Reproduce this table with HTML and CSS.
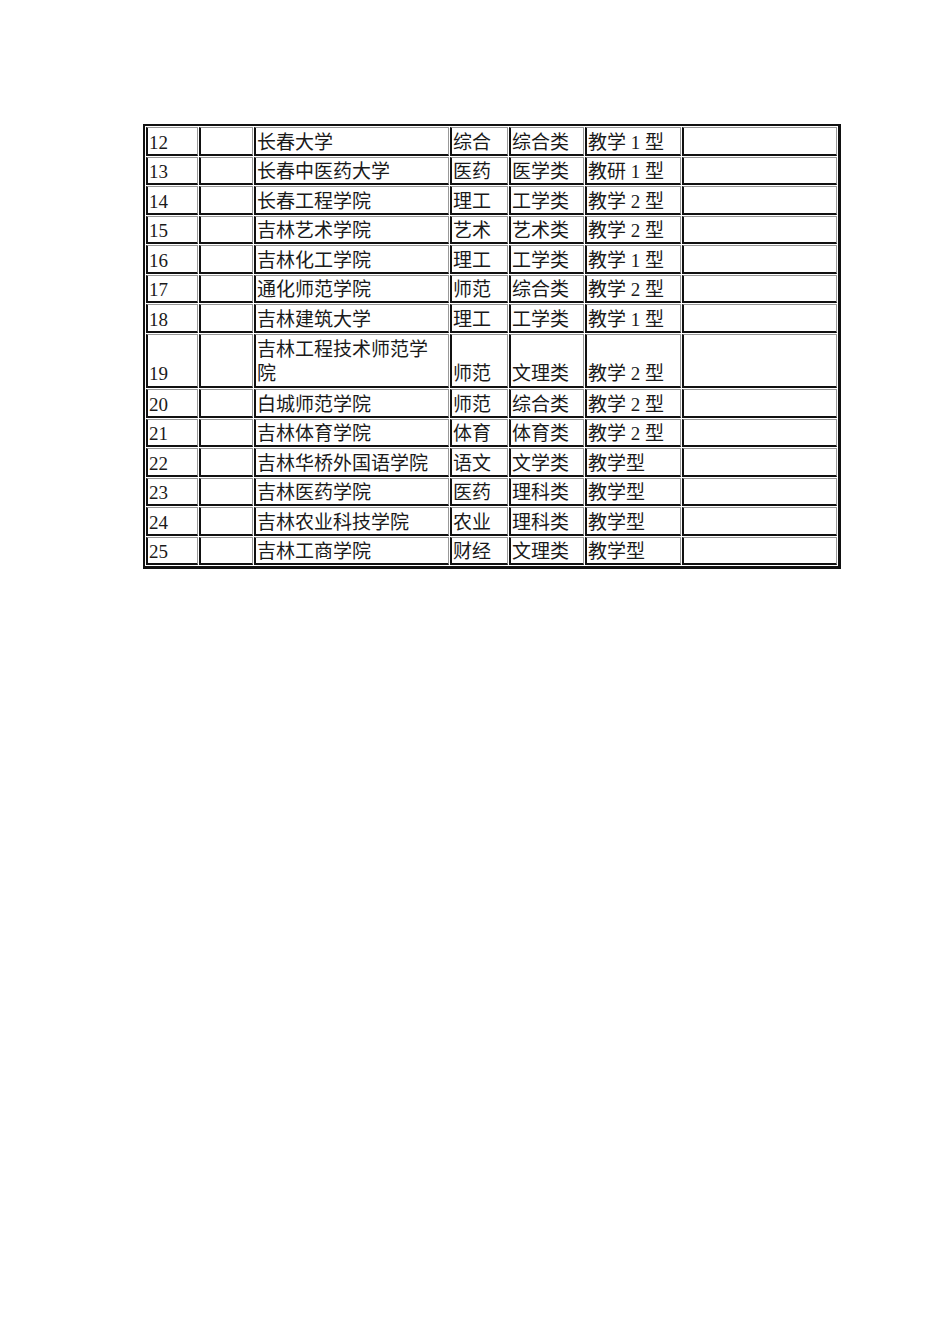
FILE: index.html
```html
<!DOCTYPE html>
<html lang="zh">
<head>
<meta charset="utf-8">
<title>吉林高校列表</title>
<link rel="stylesheet" href="styles.css">
</head>
<body>
<div class="sheet">
<table class="list">
<colgroup>
<col class="c1"><col class="c2"><col class="c3"><col class="c4"><col class="c5"><col class="c6"><col class="c7">
</colgroup>
<tbody>
<tr><td>12</td><td></td><td>长春大学</td><td>综合</td><td>综合类</td><td>教学 1 型</td><td></td></tr>
<tr><td>13</td><td></td><td>长春中医药大学</td><td>医药</td><td>医学类</td><td>教研 1 型</td><td></td></tr>
<tr><td>14</td><td></td><td>长春工程学院</td><td>理工</td><td>工学类</td><td>教学 2 型</td><td></td></tr>
<tr><td>15</td><td></td><td>吉林艺术学院</td><td>艺术</td><td>艺术类</td><td>教学 2 型</td><td></td></tr>
<tr><td>16</td><td></td><td>吉林化工学院</td><td>理工</td><td>工学类</td><td>教学 1 型</td><td></td></tr>
<tr><td>17</td><td></td><td>通化师范学院</td><td>师范</td><td>综合类</td><td>教学 2 型</td><td></td></tr>
<tr><td>18</td><td></td><td>吉林建筑大学</td><td>理工</td><td>工学类</td><td>教学 1 型</td><td></td></tr>
<tr class="tall"><td>19</td><td></td><td>吉林工程技术师范学<br>院</td><td>师范</td><td>文理类</td><td>教学 2 型</td><td></td></tr>
<tr><td>20</td><td></td><td>白城师范学院</td><td>师范</td><td>综合类</td><td>教学 2 型</td><td></td></tr>
<tr><td>21</td><td></td><td>吉林体育学院</td><td>体育</td><td>体育类</td><td>教学 2 型</td><td></td></tr>
<tr><td>22</td><td></td><td>吉林华桥外国语学院</td><td>语文</td><td>文学类</td><td>教学型</td><td></td></tr>
<tr><td>23</td><td></td><td>吉林医药学院</td><td>医药</td><td>理科类</td><td>教学型</td><td></td></tr>
<tr><td>24</td><td></td><td>吉林农业科技学院</td><td>农业</td><td>理科类</td><td>教学型</td><td></td></tr>
<tr><td>25</td><td></td><td>吉林工商学院</td><td>财经</td><td>文理类</td><td>教学型</td><td></td></tr>
</tbody>
</table>
</div>
</body>
</html>
```

FILE: styles.css
```css
html, body {
  margin: 0;
  padding: 0;
  background: #fff;
}

.sheet {
  width: 950px;
  height: 1344px;
  padding: 124px 0 0 143px;
  box-sizing: border-box;
}

.list {
  table-layout: fixed;
  width: 698px;
  border-collapse: separate;
  border-spacing: 1px;
  border-style: solid;
  border-color: #111;
  border-width: 2px 3px 3px 2px;
  font-family: "Liberation Serif", "Noto Sans CJK SC", serif;
  font-size: 19px;
  color: #1a1a1a;
}

.c1 { width: 52px; }
.c2 { width: 54px; }
.c3 { width: 195px; }
.c4 { width: 58px; }
.c5 { width: 75px; }
.c6 { width: 96px; }
.c7 { width: 155px; }

.list td {
  border-style: solid;
  border-color: #999 #999 #111 #111;
  border-width: 1px 1px 2px 2px;
  padding: 3.5px 0 0 1px;
  line-height: 22px;
  vertical-align: bottom;
  white-space: nowrap;
  overflow: hidden;
}

.list .tall td {
  line-height: 24px;
}
```
